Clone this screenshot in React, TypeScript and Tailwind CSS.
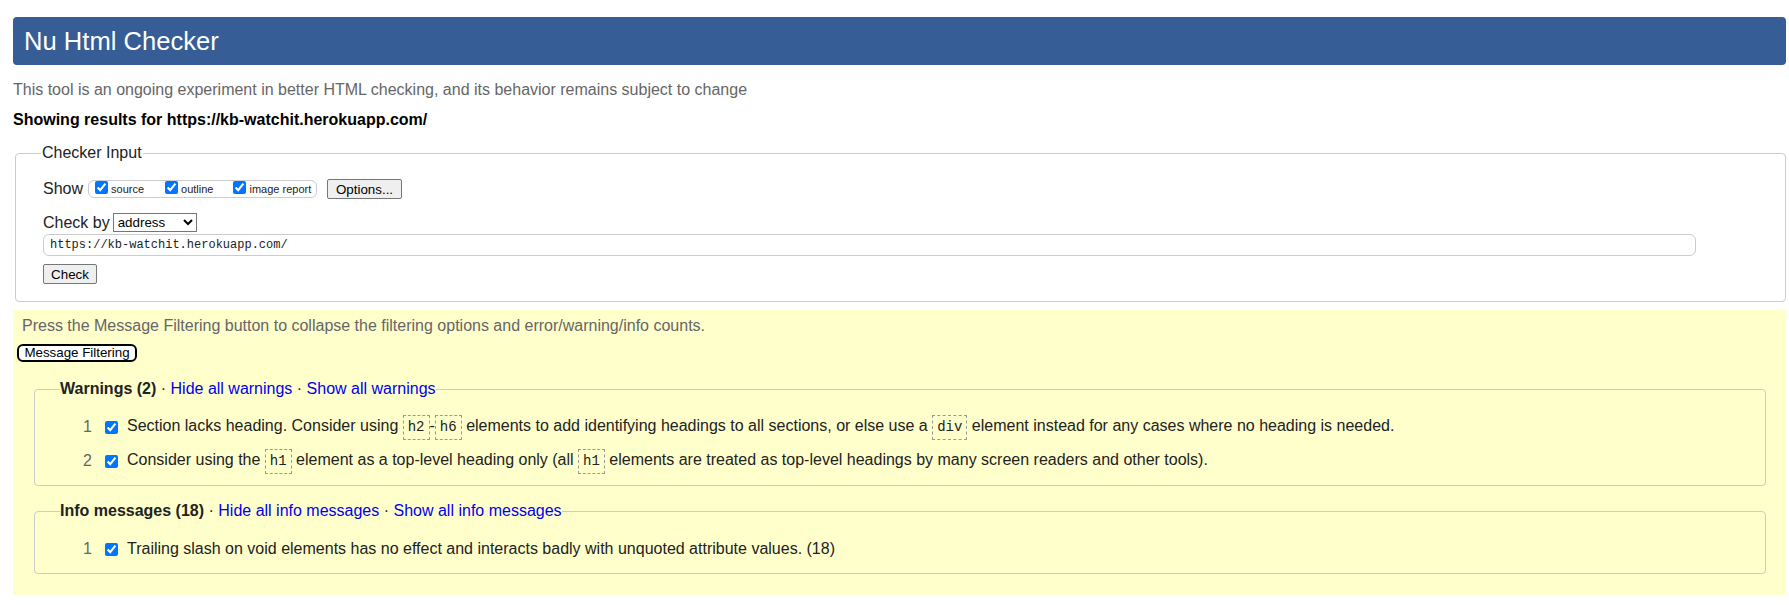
import { ReactNode } from "react";

const Code = ({ children }: { children: ReactNode }) => (
  <code className="inline-block border border-dashed border-[#999] px-[4px] py-[2px] font-['Liberation_Mono',monospace] text-[14px] leading-[19px] text-[#222]">
    {children}
  </code>
);

const Row = ({ n, children }: { n: number; children: ReactNode }) => (
  <div className="flex items-center h-[34px]">
    <span className="w-[32px] text-right text-[#666]">{n}</span>
    <input
      type="checkbox"
      defaultChecked
      readOnly
      className="ml-[13px] mr-[9px] w-[13px] h-[13px] m-0"
    />
    <span className="text-[#222]">{children}</span>
  </div>
);

const Group = ({
  title,
  hide,
  show,
  children,
}: {
  title: string;
  hide: string;
  show: string;
  children: ReactNode;
}) => (
  <fieldset className="ml-[17px] mr-[20px] border border-[#ccc] rounded-[4px] pl-[25px] pt-[12px] pb-[7px]">
    <legend className="text-[16px] leading-[18px] text-[#222] px-0">
      <span className="font-bold">{title}</span> ·{" "}
      <a href="#" className="text-[#0000ee]">
        {hide}
      </a>{" "}
      ·{" "}
      <a href="#" className="text-[#0000ee]">
        {show}
      </a>
    </legend>
    {children}
  </fieldset>
);

export default function App() {
  return (
    <div className="min-h-screen bg-white pl-[13px] pr-[3px] pt-[17px] font-['Liberation_Sans',Arial,sans-serif] text-[16px]">
      <h1 className="h-[48px] bg-[#365d95] text-white text-[25.6px] rounded-[4px] flex items-center pl-[11px]">
        Nu Html Checker
      </h1>

      <p className="mt-[16px] text-[16px] leading-[18px] text-[#666]">
        This tool is an ongoing experiment in better HTML checking, and its
        behavior remains subject to change
      </p>
      <p className="mt-[12px] text-[16px] leading-[18px] font-bold text-black">
        Showing results for https://kb-watchit.herokuapp.com/
      </p>

      {/* checker input */}
      <fieldset className="mt-[15px] ml-[2px] border border-[#ccc] rounded-[4px] pl-[27px] pt-[17px] pb-[17px]">
        <legend className="text-[16px] leading-[18px] text-[#222] px-[1px] -ml-[2px]">
          Checker Input
        </legend>
        <div className="flex items-center h-[20px] text-[#222]">
          <span>Show</span>
          <div className="ml-[5px] h-[18px] w-[229px] flex items-center border border-[#ccc] rounded-[6px] pl-[6px] text-[11px]">
            <label className="flex items-center">
              <input type="checkbox" defaultChecked readOnly className="m-0 w-[13px] h-[13px] -mt-[4px]" />
              <span className="ml-[3px]">source</span>
            </label>
            <label className="flex items-center ml-[21px]">
              <input type="checkbox" defaultChecked readOnly className="m-0 w-[13px] h-[13px] -mt-[4px]" />
              <span className="ml-[3px]">outline</span>
            </label>
            <label className="flex items-center ml-[20px]">
              <input type="checkbox" defaultChecked readOnly className="m-0 w-[13px] h-[13px] -mt-[4px]" />
              <span className="ml-[3px]">image report</span>
            </label>
          </div>
          <button className="ml-[10px] w-[75px] h-[20px] bg-[#efefef] border border-[#767676] rounded-[2px] text-[13.33px] text-black">
            Options...
          </button>
        </div>

        <div className="flex items-center mt-[14px] h-[19px] text-[#222]">
          <span>Check by</span>
          <select
            defaultValue="address"
            className="ml-[3px] w-[84px] h-[19px] border border-[#767676] bg-white text-[13.33px] text-black"
          >
            <option value="address">address</option>
            <option value="file">file upload</option>
            <option value="text">text input</option>
          </select>
        </div>

        <input
          type="text"
          readOnly
          value="https://kb-watchit.herokuapp.com/"
          className="block mt-[2px] w-[1653px] h-[22px] border border-[#ccc] rounded-[6px] px-[6px] font-['Liberation_Mono',monospace] text-[12px] text-[#222]"
        />

        <button className="block mt-[8px] w-[54px] h-[20px] bg-[#efefef] border border-[#767676] rounded-[2px] text-[13.33px] text-black">
          Check
        </button>
      </fieldset>

      {/* results */}
      <div className="mt-[8px] bg-[#ffffcc] pl-[4px] pt-[7px] pb-[21px]">
        <p className="ml-[5px] text-[16px] leading-[18px] text-[#666]">
          Press the Message Filtering button to collapse the filtering options
          and error/warning/info counts.
        </p>
        <button className="mt-[9px] w-[120px] h-[18px] border-2 border-black rounded-[6px] bg-white text-[13.33px] leading-[14px] text-black">
          Message Filtering
        </button>

        <div className="mt-[16px]">
          <Group title="Warnings (2)" hide="Hide all warnings" show="Show all warnings">
            <Row n={1}>
              Section lacks heading. Consider using <Code>h2</Code>-<Code>h6</Code>{" "}
              elements to add identifying headings to all sections, or else use a{" "}
              <Code>div</Code> element instead for any cases where no heading is
              needed.
            </Row>
            <Row n={2}>
              Consider using the <Code>h1</Code> element as a top-level heading
              only (all <Code>h1</Code> elements are treated as top-level headings
              by many screen readers and other tools).
            </Row>
          </Group>
        </div>

        <div className="mt-[16px]">
          <Group
            title="Info messages (18)"
            hide="Hide all info messages"
            show="Show all info messages"
          >
            <Row n={1}>
              Trailing slash on void elements has no effect and interacts badly
              with unquoted attribute values. (18)
            </Row>
          </Group>
        </div>
      </div>
    </div>
  );
}
